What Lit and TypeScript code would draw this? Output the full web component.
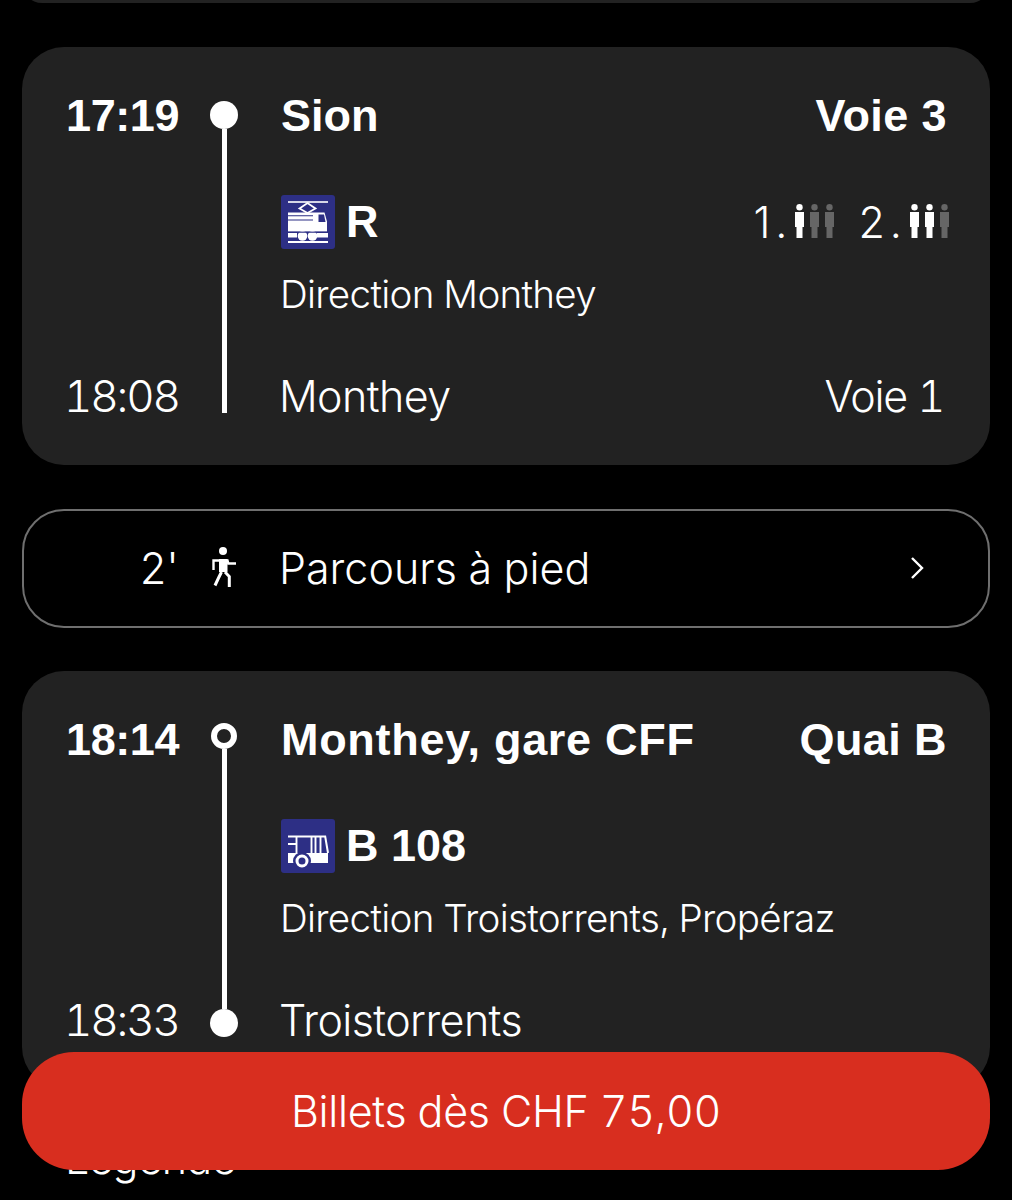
import { LitElement, html, css, svg } from "lit";
import { customElement } from "lit/decorators.js";

const trainIcon = html`<svg class="mode" viewBox="0 0 54 54">
  <rect width="54" height="54" rx="3" fill="#2d2f85"></rect>
  <g fill="#fff">
    <rect x="7" y="6.200" width="40" height="1.600"></rect>
    <rect x="7" y="46" width="40" height="2"></rect>
    <path d="M7 17.500h36.500l2.500 9v10H7z"></path>
    <rect x="7" y="38" width="9" height="4.500"></rect>
    <rect x="36" y="38" width="11" height="4.500"></rect>
    <circle cx="21.500" cy="41" r="4.800"></circle>
    <circle cx="31.500" cy="41" r="4.800"></circle>
  </g>
  <path d="M18.500 13.500l8-5.500 8 5.500-8 4.500z" fill="none" stroke="#fff" stroke-width="1.800"></path>
  <path d="M37.500 19.500h5.500l1.500 7.500h-7z" fill="#2d2f85"></path>
  <path d="M7 20.700h25M7 25h25M7 37.200h40" stroke="#2d2f85" stroke-width="1.100"></path>
</svg>`;

const busIcon = html`<svg class="mode" viewBox="0 0 54 54">
  <rect width="54" height="54" rx="3" fill="#2d2f85"></rect>
  <path d="M7 34h40v10H7z" fill="#fff"></path>
  <path d="M7 17.500h37.200L47 34" fill="none" stroke="#fff" stroke-width="2"></path>
  <path d="M15.500 17.500V34M30.500 17.500V34M34.500 17.500V34M39.500 17.500V34M7 25h8.500" fill="none" stroke="#fff" stroke-width="1.900"></path>
  <circle cx="21" cy="42" r="9" fill="#2d2f85"></circle>
  <circle cx="21" cy="42" r="5" fill="#2d2f85" stroke="#fff" stroke-width="3"></circle>
</svg>`;

const walkIcon = html`<svg class="walk" viewBox="0 0 26 44">
  <circle cx="12" cy="5" r="4" fill="#fff"></circle>
  <path d="M2.500 24V14.500h14l.8 3H25" fill="none" stroke="#fff" stroke-width="2.400"></path>
  <path d="M8 13h8.500v13H8z" fill="#fff"></path>
  <path d="M10.500 26l-3 6L4 39.500M14 26l4.300 4.500V41" fill="none" stroke="#fff" stroke-width="3"></path>
</svg>`;

// one little figure of the occupancy indicator
const person = (x: number, on: boolean) => svg`<g fill=${on ? "#fff" : "#666"}>
  <circle cx=${x + 4.5} cy="3.200" r="3.200"></circle>
  <path d="M${x} 8h9v15h-1.500v11h-6V23H${x}z"></path>
</g>`;

const occupancy = (level: number) => html`<svg class="people" viewBox="0 0 39 34">
  ${[0, 1, 2].map((i) => person(i * 15, i < level))}
</svg>`;

const chevron = html`<svg class="chevron" viewBox="0 0 14 24">
  <path d="M2 2l10 10L2 22" fill="none" stroke="#fff" stroke-width="2.400"></path>
</svg>`;

@customElement("app-root")
export class AppRoot extends LitElement {
  static styles = css`
    :host {
      display: block;
      position: relative;
      height: 1200px;
      overflow: hidden;
      background: #000;
      color: #fff;
      font-family: "Inter", "Liberation Sans", sans-serif;
      font-weight: 300;
      font-size: 43px;
      letter-spacing: -0.8px;
      font-variant-numeric: tabular-nums;
    }

    .prev {
      height: 40px;
      margin: -37px 22px 44px;
      background: #222;
      border-radius: 40px;
    }

    .card {
      display: grid;
      grid-template-columns: 130px 56px 1fr;
      grid-template-rows: 48px auto 48px;
      margin: 0 22px;
      padding: 44px 43px 45px 44px;
      background: #222;
      border-radius: 42px;
      line-height: 48px;
    }

    .bold {
      font-family: "Liberation Sans", sans-serif;
      font-weight: 700;
      font-size: 45px;
      letter-spacing: 0;
      line-height: 50px;
    }

    .bold.clock {
      letter-spacing: -0.4px;
    }

    .wide {
      letter-spacing: 0.7px;
    }

    .platform {
      letter-spacing: 0.4px;
    }

    .time {
      font-size: 44px;
      letter-spacing: -2.200px;
      margin-left: -2px;
    }

    .line {
      grid-column: 2;
      grid-row: 1 / 4;
      display: flex;
      flex-direction: column;
      align-items: center;
      padding: 10px 0 7px;
    }

    .line .bar {
      flex: 1;
      width: 5px;
      background: #fff;
    }

    .dot {
      flex: none;
      width: 28px;
      height: 28px;
      border-radius: 50%;
      background: #fff;
    }

    .dot.ring {
      box-sizing: border-box;
      width: 26px;
      height: 26px;
      background: transparent;
      border: 6px solid #fff;
      margin-top: -2px;
    }

    .row {
      grid-column: 3;
      display: flex;
      justify-content: space-between;
      padding-left: 29px;
    }

    .row.light {
      grid-row: 3;
      padding-left: 27px;
      letter-spacing: -0.6px;
    }

    .time.end {
      grid-column: 1;
      grid-row: 3;
    }

    .voie {
      margin-right: 3px;
      letter-spacing: -1.200px;
    }

    .middle {
      grid-column: 3;
      padding: 59px 0 54px 29px;
      display: flex;
      flex-direction: column;
      gap: 24px;
    }

    .direction {
      font-size: 38.6px;
      letter-spacing: -0.7px;
      margin-left: -1px;
    }

    .mode-row {
      display: flex;
      align-items: center;
      height: 48px;
      gap: 11px;
    }

    .mode {
      width: 54px;
      height: 54px;
      flex: none;
    }

    .classes {
      margin-left: auto;
      display: flex;
      align-items: center;
      gap: 8px;
      margin-right: -2px;
    }

    .classes .nr {
      font-variant-numeric: normal;
      letter-spacing: 5px;
      margin-right: -5px;
    }

    .classes .gap {
      width: 8px;
    }

    .people {
      width: 39px;
      height: 34px;
      margin-bottom: 3px;
    }

    .walk-row {
      display: flex;
      align-items: center;
      height: 113px;
      padding-bottom: 2px;
      margin: 44px 22px 43px;
      border: 2px solid #6f6f6f;
      border-radius: 42px;
      background: #000;
    }

    .walk-time {
      width: 154px;
      text-align: right;
    }

    .walk {
      width: 26px;
      height: 44px;
      margin-left: 33px;
    }

    .walk-label {
      flex: 1;
      margin-left: 42px;
      letter-spacing: 0;
    }

    .chevron {
      width: 14px;
      height: 24px;
      margin-right: 64px;
    }

    .legend {
      margin: 45px 65px 0;
      line-height: 48px;
    }

    .cta {
      position: absolute;
      left: 22px;
      right: 22px;
      top: 1052px;
      height: 118px;
      display: flex;
      align-items: center;
      justify-content: center;
      background: #d82e1f;
      border-radius: 52px;
      letter-spacing: -0.3px;
    }
  `;

  render() {
    return html`
      <div class="prev"></div>

      <section class="card">
        <div class="bold clock">17:19</div>
        <div class="line"><span class="dot"></span><span class="bar"></span></div>
        <div class="row bold"><span>Sion</span><span class="platform">Voie 3</span></div>
        <div class="middle">
          <div class="mode-row">
            ${trainIcon}<span class="bold">R</span>
            <div class="classes">
              <span class="nr">1.</span>${occupancy(1)}<span class="gap"></span>
              <span class="nr">2.</span>${occupancy(2)}
            </div>
          </div>
          <div class="direction">Direction Monthey</div>
        </div>
        <div class="time end">18:08</div>
        <div class="row light"><span>Monthey</span><span class="voie">Voie 1</span></div>
      </section>

      <div class="walk-row">
        <span class="walk-time">2'</span>
        ${walkIcon}
        <span class="walk-label">Parcours à pied</span>
        ${chevron}
      </div>

      <section class="card">
        <div class="bold clock">18:14</div>
        <div class="line">
          <span class="dot ring"></span><span class="bar"></span><span class="dot"></span>
        </div>
        <div class="row bold"><span class="wide">Monthey, gare CFF</span><span class="platform">Quai B</span></div>
        <div class="middle">
          <div class="mode-row">${busIcon}<span class="bold">B 108</span></div>
          <div class="direction">Direction Troistorrents, Propéraz</div>
        </div>
        <div class="time end">18:33</div>
        <div class="row light"><span>Troistorrents</span></div>
      </section>

      <div class="legend">Légende</div>

      <div class="cta">Billets dès CHF 75,00</div>
    `;
  }
}
